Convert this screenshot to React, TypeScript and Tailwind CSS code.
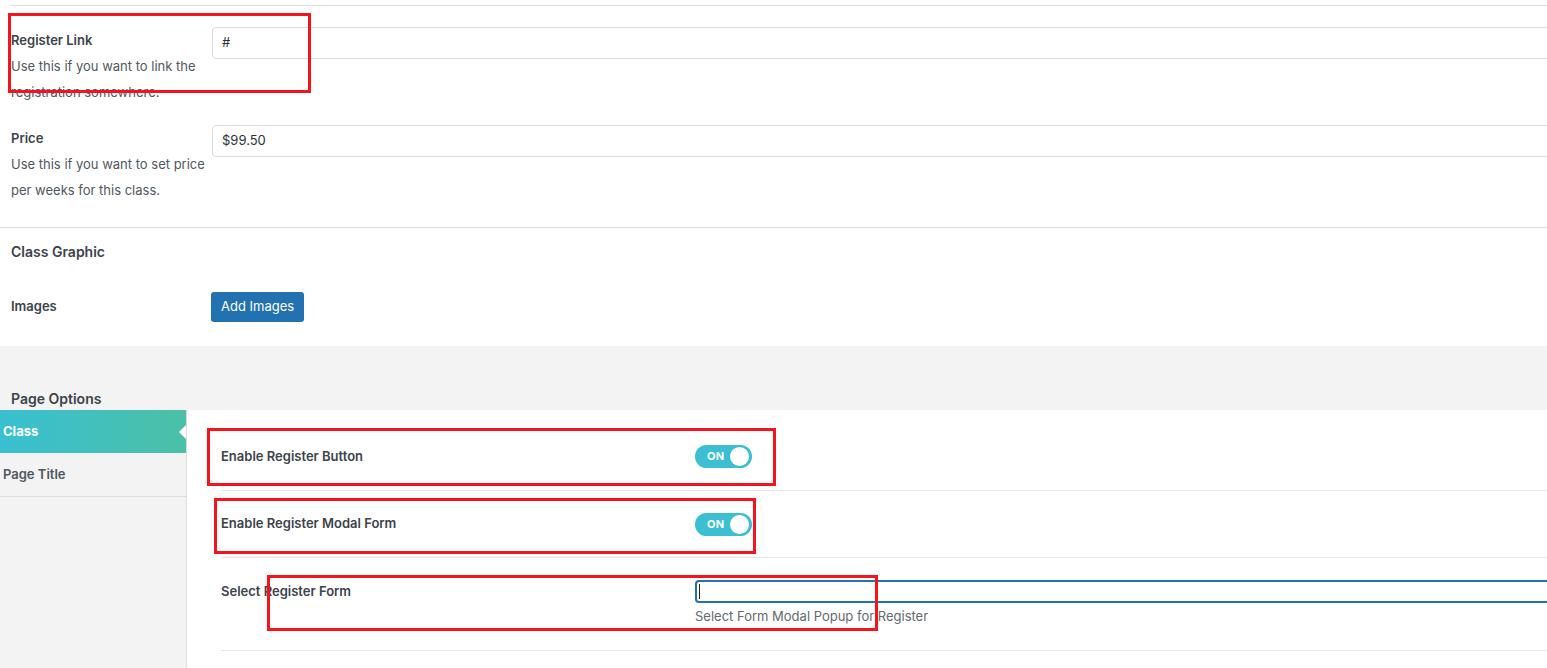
import React from "react";

const font = { fontFamily: "Inter, 'Noto Sans', 'Liberation Sans', sans-serif" };

function Toggle() {
  return (
    <div className="h-[23px] w-[57px] rounded-full bg-[#3cbfd2] flex items-center justify-between pl-[12px] pr-[3px]">
      <span className="text-[11px] font-bold text-white tracking-wide">ON</span>
      <span className="w-[19px] h-[19px] rounded-full bg-white"></span>
    </div>
  );
}

function FieldRow({ label, desc, value }: { label: string; desc: string; value: string }) {
  return (
    <div className="flex items-start">
      <div className="w-[212px] pl-[11px] pr-2 shrink-0">
        <div className="text-[13px] leading-[26px] font-semibold text-[#3c434a]">{label}</div>
        <div className="text-[13px] leading-[26px] text-[#50575e] w-[195px]">{desc}</div>
      </div>
      <div className="flex-1 h-[32px] border border-[#dcdcde] rounded-[4px] bg-white flex items-center px-[9px] text-[13px] text-[#2c3338]">
        {value}
      </div>
    </div>
  );
}

export default function App() {
  return (
    <div className="relative w-[1547px] h-[668px] overflow-hidden bg-white" style={font}>
      <div className="w-[1570px]">
        {/* general fields */}
        <div className="ml-[10px] border-t border-[#dcdcde] mt-[5px]"></div>
        <div className="pt-[21px] flex flex-col gap-[20px] pb-[24px]">
          <FieldRow label="Register Link" desc="Use this if you want to link the registration somewhere." value="#" />
          <FieldRow label="Price" desc="Use this if you want to set price per weeks for this class." value="$99.50" />
        </div>
        <div className="border-t border-[#dcdcde]"></div>

        <div className="pl-[11px] pt-[13px] text-[14px] leading-[22px] font-semibold text-[#3c434a]">Class Graphic</div>
        <div className="flex items-center pt-[29px] pb-[24px]">
          <div className="w-[211px] pl-[11px] text-[13px] font-semibold text-[#3c434a]">Images</div>
          <button className="h-[30px] px-[10px] rounded-[3px] bg-[#2271b1] text-white text-[13px]">Add Images</button>
        </div>

        {/* page options */}
        <div className="bg-[#f3f3f3] h-[322px] flex flex-col">
          <div className="h-[64px] flex items-end pl-[11px] text-[14px] font-semibold text-[#3c434a] leading-[18px] pb-[2px]">
            Page Options
          </div>
          <div className="flex flex-1">
            <div className="w-[187px] shrink-0 border-r border-[#dddddd]">
              <div className="relative h-[43px] bg-gradient-to-r from-[#38bfd1] to-[#4cc0a6] flex items-center pl-[3px] text-[13px] font-bold text-white">
                Class
                <span className="absolute right-0 top-[15px] w-0 h-0 border-y-[7px] border-y-transparent border-r-[7px] border-r-white"></span>
              </div>
              <div className="h-[44px] border-b border-[#dddddd] flex items-center pl-[3px] text-[13px] font-semibold text-[#50575e]">
                Page Title
              </div>
            </div>
            <div className="flex-1 bg-white pl-[34px] pt-[13px]">
              <div className="flex items-center h-[68px] border-b border-[#e5e5e5]">
                <div className="w-[474px] text-[13px] font-semibold text-[#3c434a]">Enable Register Button</div>
                <Toggle />
              </div>
              <div className="flex items-center h-[67px] border-b border-[#e5e5e5]">
                <div className="w-[474px] text-[13px] font-semibold text-[#3c434a]">Enable Register Modal Form</div>
                <Toggle />
              </div>
              <div className="flex items-start h-[93px] border-b border-[#e5e5e5] pt-[22px]">
                <div className="w-[474px] text-[13px] font-semibold text-[#3c434a] leading-[22px]">Select Register Form</div>
                <div className="flex-1">
                  <div className="h-[23px] border-2 border-[#2271b1] rounded-[4px] flex items-center pl-[2px]">
                    <span className="w-px h-[15px] bg-[#1d2327]"></span>
                  </div>
                  <div className="pt-[4px] text-[13px] leading-[18px] text-[#646970]">Select Form Modal Popup for Register</div>
                </div>
              </div>
            </div>
          </div>
        </div>
      </div>

      {/* red annotation boxes */}
      <div className="absolute left-[8px] top-[13px] w-[303px] h-[80px] border-[3px] border-[#f5141b] pointer-events-none"></div>
      <div className="absolute left-[207px] top-[428px] w-[569px] h-[58px] border-[3px] border-[#f5141b] pointer-events-none"></div>
      <div className="absolute left-[214px] top-[498px] w-[542px] h-[56px] border-[3px] border-[#f5141b] pointer-events-none"></div>
      <div className="absolute left-[267px] top-[575px] w-[611px] h-[56px] border-[3px] border-[#f5141b] pointer-events-none"></div>
    </div>
  );
}
